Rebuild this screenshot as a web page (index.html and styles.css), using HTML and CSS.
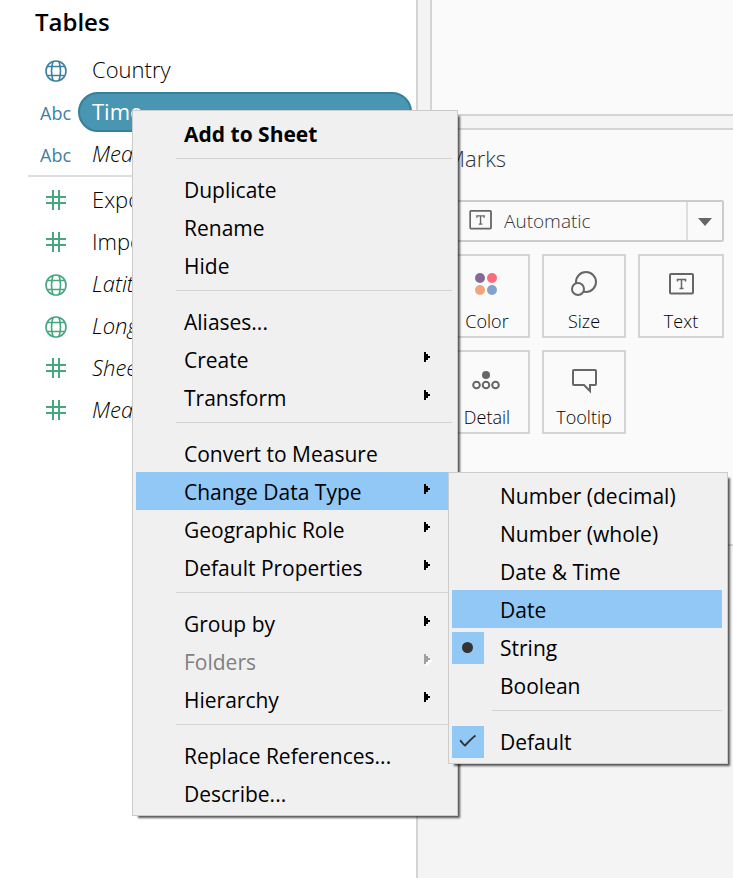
FILE: index.html
```html
<!DOCTYPE html>
<html lang="en">
<head>
<meta charset="utf-8">
<meta name="viewport" content="width=device-width, initial-scale=1">
<title>Worksheet</title>
<link rel="stylesheet" href="styles.css">
</head>
<body>
<svg class="defs" aria-hidden="true">
  <symbol id="globe" viewBox="0 0 22 22"><g fill="none" stroke="currentColor" stroke-width="1.600"><circle cx="11" cy="11" r="10"/><path d="M8 1.500Q5 11 8 20.500M14 1.500Q17 11 14 20.500M2.500 6.500H19.500M2.500 15.500H19.500"/></g></symbol>
  <symbol id="hash" viewBox="0 0 20 20"><path d="M7 0V20M13 0V20M0 7H20M0 13H20" fill="none" stroke="currentColor" stroke-width="2"/></symbol>
  <symbol id="arrow" viewBox="0 0 6 10"><path d="M0 0H2V2H4V4H6V6H4V8H2V10H0Z" fill="currentColor"/></symbol>
  <symbol id="text-mark" viewBox="0 0 26 22"><rect x="1" y="1" width="23" height="19.500" rx="1" fill="none" stroke="currentColor" stroke-width="2"/><path d="M8.500 8.500V6.500H16.500V8.500M12.500 6.500V15.500M10.500 15.500H14.500" fill="none" stroke="currentColor" stroke-width="1.500"/></symbol>
</svg>
<div class="app">
  <aside class="data-pane">
    <h2>Tables</h2>
    <ul class="fields dimensions">
      <li><svg class="globe"><use href="#globe"/></svg><span>Country</span></li>
      <li class="selected"><b class="abc">Abc</b><span>Time</span></li>
      <li><b class="abc">Abc</b><i>Measure</i></li>
    </ul>
    <ul class="fields measures">
      <li><svg class="hash"><use href="#hash"/></svg><span>Exports</span></li>
      <li><svg class="hash"><use href="#hash"/></svg><span>Imports</span></li>
      <li><svg class="globe"><use href="#globe"/></svg><i>Latitude</i></li>
      <li><svg class="globe"><use href="#globe"/></svg><i>Longitude</i></li>
      <li><svg class="hash"><use href="#hash"/></svg><i>Sheet1</i></li>
      <li><svg class="hash"><use href="#hash"/></svg><i>Measure</i></li>
    </ul>
  </aside>
  <main class="shelves">
    <section class="card filters"></section>
    <section class="card marks">
      <h3>Marks</h3>
      <div class="mark-type">
        <select aria-label="Mark type"><option>Automatic</option></select>
        <svg class="type-icon" viewBox="0 0 26 22"><use href="#text-mark"/></svg>
        <svg class="caret" viewBox="0 0 14 8"><path d="M0 0H14L7 8Z" fill="#666"/></svg>
      </div>
      <div class="mark-grid">
        <button type="button"><svg viewBox="0 0 32 28"><circle cx="9" cy="8" r="5" fill="#846b94"/><circle cx="21" cy="8" r="5" fill="#fb6b7b"/><circle cx="9" cy="20" r="5" fill="#f2a57c"/><circle cx="21" cy="20" r="5" fill="#80a2cb"/></svg>Color</button>
        <button type="button"><svg viewBox="0 0 32 28"><g fill="#fafafa" stroke="#666" stroke-width="2"><circle cx="18" cy="12" r="10"/><circle cx="10" cy="19" r="6"/></g></svg>Size</button>
        <button type="button"><svg viewBox="-4 -3 32 28"><use href="#text-mark" width="26" height="22"/></svg>Text</button>
        <button type="button"><svg viewBox="0 0 32 28"><circle cx="15" cy="9" r="4" fill="#666"/><g fill="none" stroke="#666" stroke-width="2"><circle cx="5.500" cy="19" r="3.300"/><circle cx="15" cy="19" r="3.300"/><circle cx="24.500" cy="19" r="3.300"/></g></svg>Detail</button>
        <button type="button"><svg viewBox="0 0 32 28"><path d="M6 4H27Q28 4 28 5V18Q28 19 27 19H22V25L16 19H6Q5 19 5 18V5Q5 4 6 4Z" fill="none" stroke="#666" stroke-width="2"/></svg>Tooltip</button>
      </div>
    </section>
  </main>
</div>

<div class="menu context-menu" role="menu">
  <button type="button" class="item primary">Add to Sheet</button>
  <hr>
  <button type="button" class="item">Duplicate</button>
  <button type="button" class="item">Rename</button>
  <button type="button" class="item">Hide</button>
  <hr>
  <button type="button" class="item">Aliases...</button>
  <button type="button" class="item">Create<svg class="arrow"><use href="#arrow"/></svg></button>
  <button type="button" class="item">Transform<svg class="arrow"><use href="#arrow"/></svg></button>
  <hr>
  <button type="button" class="item">Convert to Measure</button>
  <button type="button" class="item active">Change Data Type<svg class="arrow"><use href="#arrow"/></svg></button>
  <button type="button" class="item">Geographic Role<svg class="arrow"><use href="#arrow"/></svg></button>
  <button type="button" class="item">Default Properties<svg class="arrow"><use href="#arrow"/></svg></button>
  <hr>
  <button type="button" class="item">Group by<svg class="arrow"><use href="#arrow"/></svg></button>
  <button type="button" class="item" disabled>Folders<svg class="arrow"><use href="#arrow"/></svg></button>
  <button type="button" class="item">Hierarchy<svg class="arrow"><use href="#arrow"/></svg></button>
  <hr>
  <button type="button" class="item">Replace References...</button>
  <button type="button" class="item">Describe...</button>
</div>

<div class="menu type-menu" role="menu">
  <label class="item"><input type="radio" name="type">Number (decimal)</label>
  <label class="item"><input type="radio" name="type">Number (whole)</label>
  <label class="item"><input type="radio" name="type">Date &amp; Time</label>
  <label class="item active"><input type="radio" name="type">Date</label>
  <label class="item"><input type="radio" name="type" checked>String<svg class="mark" viewBox="0 0 32 32"><circle cx="15.500" cy="15.500" r="5.500" fill="#333"/></svg></label>
  <label class="item"><input type="radio" name="type">Boolean</label>
  <hr>
  <label class="item"><input type="checkbox" checked>Default<svg class="mark" viewBox="0 0 32 32"><path d="M8 14.500C9.500 15 10.500 18 13 19.500C15.500 17 19.500 12.500 23.500 9.500" fill="none" stroke="#333" stroke-width="2"/></svg></label>
</div>
</body>
</html>
```
FILE: styles.css
```css
* { box-sizing: border-box; }

body {
  margin: 0;
  background: #fff;
  color: #000;
  font-family: "Open Sans", "Noto Sans", sans-serif;
  font-size: 22px;
  font-weight: 300;
}

button, select { font: inherit; color: inherit; margin: 0; }

.defs { position: absolute; width: 0; height: 0; }

.app {
  display: grid;
  grid-template-columns: 418px 1fr;
  min-height: 100vh;
}

/* Data pane */
.data-pane { border-right: 2px solid #d4d4d4; padding: 0 4px 0 28px; }

.data-pane h2 {
  margin: 0;
  padding: 6px 0 11px 7px;
  font-size: 24px;
  line-height: 32px;
  font-weight: 600;
}

.fields { list-style: none; margin: 0; padding: 0; }
.dimensions { color: #3d81a0; }
.measures { color: #46a67e; border-top: 2px solid #dedede; padding-top: 2px; }

.fields li {
  display: grid;
  grid-template-columns: 50px 1fr;
  align-items: center;
  height: 42px;
}

.fields span, .fields i {
  color: #000;
  height: 40px;
  line-height: 38px;
  padding-left: 14px;
  white-space: nowrap;
}

.fields .selected span {
  color: #fff;
  background: #4996b2;
  border: 2px solid #367f9c;
  border-radius: 20px;
  line-height: 34px;
  padding-left: 12px;
  font-weight: 400;
}

.abc { font-size: 18px; font-weight: 400; padding: 2px 0 0 12px; }
.globe { width: 22px; height: 22px; margin: 2px 0 0 17px; }
.hash { width: 20px; height: 20px; margin-left: 18px; }

/* Shelves */
.shelves {
  display: flex;
  flex-direction: column;
  gap: 12px;
  padding-left: 12px;
  background: #f4f4f4;
}

.card { background: #fafafa; border: 2px solid #d4d4d4; border-right: 0; }
.filters { height: 116px; border-top: 0; }
.marks { padding: 12px 9px 110px 12px; color: #333; }
.marks h3 { margin: 0 0 26px; padding-left: 2px; font-size: 22px; line-height: 32px; font-weight: 300; }

.mark-type { position: relative; display: flex; margin-bottom: 12px; }

.mark-type select {
  appearance: none;
  width: 100%;
  height: 42px;
  padding: 0 58px;
  font-size: 19px;
  background: linear-gradient(90deg, transparent calc(100% - 36px), #dedede calc(100% - 36px), #dedede calc(100% - 34px), transparent calc(100% - 34px));
  border: 2px solid #ccc;
  border-radius: 2px;
}

.type-icon { position: absolute; left: 25px; top: 10px; width: 24px; height: 20px; color: #666; pointer-events: none; }
.caret { position: absolute; right: 12px; top: 18px; width: 14px; height: 8px; pointer-events: none; }

.mark-grid { display: grid; grid-template-columns: 86fr 84fr 86fr; gap: 12px; }

.mark-grid button {
  display: flex;
  flex-direction: column;
  align-items: center;
  height: 84px;
  padding: 14px 0 0;
  gap: 11px;
  font-size: 18px;
  line-height: 24px;
  color: #000;
  background: none;
  border: 2px solid #d4d4d4;
}

.mark-grid svg { width: 32px; height: 28px; color: #666; flex: none; }

/* Menus */
.menu {
  position: absolute;
  padding: 3px 5px 3px 3px;
  background: #f0f0f0;
  border: 1px solid #ccc;
  box-shadow: 4px 4px 2px -2px rgba(0, 0, 0, .65);
  font-size: 21px;
  font-weight: 400;
}

.context-menu { left: 132px; top: 110px; width: 326px; }
.type-menu { left: 448px; top: 472px; width: 280px; }

.menu hr { height: 1px; margin: 6px 0 11px 40px; border: 0; background: #d4d4d4; }

.item {
  position: relative;
  display: flex;
  align-items: center;
  width: 100%;
  height: 38px;
  padding: 2px 22px 0 48px;
  background: none;
  border: 0;
  white-space: nowrap;
}

.item.primary { font-weight: 700; }
.item.active { background: #91c8f6; }
.item:disabled { color: #808080; }

.arrow { width: 6px; height: 10px; margin: 0 0 6px auto; color: #000; }
.item:disabled .arrow { color: #a0a0a0; filter: drop-shadow(2px 2px 0 #fff); }

.item input {
  appearance: none;
  position: absolute;
  left: 0;
  top: 4px;
  width: 32px;
  height: 32px;
  margin: 0;
}

.item input:checked { background: #91c8f6; }
.mark { position: absolute; left: 0; top: 4px; width: 32px; height: 32px; }
```
